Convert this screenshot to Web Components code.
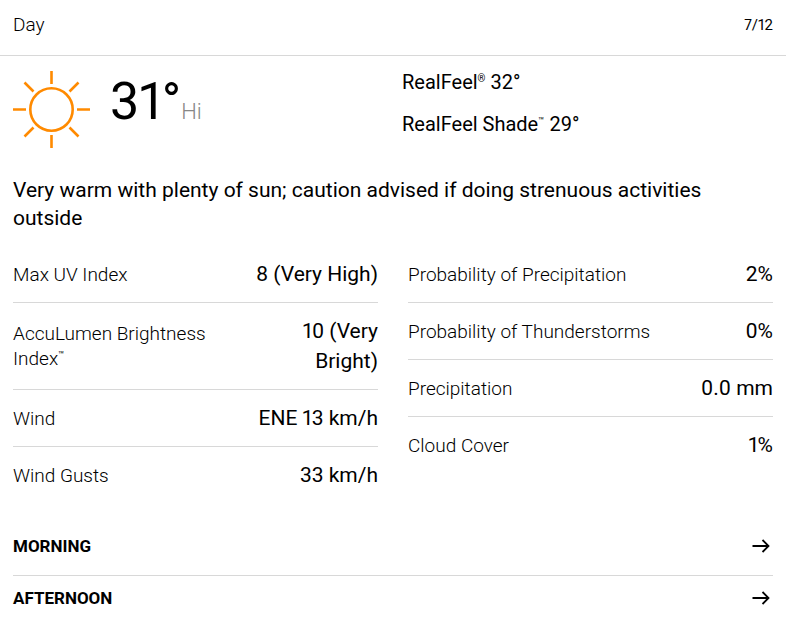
<!DOCTYPE html>
<html lang="en">
<head>
<meta charset="utf-8">
<meta name="viewport" content="width=device-width, initial-scale=1">
<title>Day forecast</title>
<style>
    body {
        margin: 0;
        background: #fff;
        color: #000;
        font-family: Roboto, "Liberation Sans", sans-serif;
        font-variant-numeric: proportional-nums;
    }
</style>
</head>
<body>
<day-card heading="Day" date="7/12">
    <current-temp slot="temp" value="31°" note="Hi"></current-temp>
    <real-feel slot="feel" name="RealFeel" mark="®" value="32°"></real-feel>
    <real-feel slot="feel" name="RealFeel Shade" mark="™" value="29°"></real-feel>
    <span slot="phrase">Very warm with plenty of sun; caution advised if doing strenuous activities outside</span>
    <detail-row slot="left" value="8 (Very High)">Max UV Index</detail-row>
    <detail-row slot="left" value="10 (Very Bright)">AccuLumen Brightness <span>Index</span><sup>™</sup></detail-row>
    <detail-row slot="left" value="ENE 13 km/h">Wind</detail-row>
    <detail-row slot="left" value="33 km/h">Wind Gusts</detail-row>
    <detail-row slot="right" value="2%">Probability of Precipitation</detail-row>
    <detail-row slot="right" value="0%">Probability of Thunderstorms</detail-row>
    <detail-row slot="right" value="0.0 mm">Precipitation</detail-row>
    <detail-row slot="right" value="1%">Cloud Cover</detail-row>
    <period-link slot="periods" href="#morning">Morning</period-link>
    <period-link slot="periods" href="#afternoon">Afternoon</period-link>
</day-card>

<script>
class DayCard extends HTMLElement {
    constructor() {
        super();
        this.attachShadow({ mode: 'open' });
        this.shadowRoot.innerHTML = `
            <style>
                :host {
                    display: block;
                }
                header {
                    display: flex;
                    justify-content: space-between;
                    align-items: center;
                    padding: 13px 13px 18px;
                    border-bottom: 1px solid #d8d8d8;
                    line-height: 24px;
                }
                h2 {
                    margin: 0;
                    font-size: 19px;
                    font-weight: 300;
                }
                .date {
                    font-size: 15px;
                }
                .content {
                    padding: 0 13px;
                }
                .top {
                    display: grid;
                    grid-template-columns: 1fr 1fr;
                    column-gap: 18px;
                    padding-top: 12px;
                }
                .phrase {
                    margin: 24px 0 14px;
                    font-size: 21px;
                    line-height: 28px;
                }
                .details {
                    display: grid;
                    grid-template-columns: 1fr 1fr;
                    column-gap: 30px;
                }
                .periods {
                    margin-top: 20px;
                }
            </style>
            <header>
                <h2>${this.getAttribute('heading')}</h2>
                <span class="date">${this.getAttribute('date')}</span>
            </header>
            <div class="content">
                <div class="top">
                    <slot name="temp"></slot>
                    <div><slot name="feel"></slot></div>
                </div>
                <p class="phrase"><slot name="phrase"></slot></p>
                <div class="details">
                    <div><slot name="left"></slot></div>
                    <div><slot name="right"></slot></div>
                </div>
                <nav class="periods"><slot name="periods"></slot></nav>
            </div>
        `;
    }
}

class CurrentTemp extends HTMLElement {
    constructor() {
        super();
        this.attachShadow({ mode: 'open' });
        this.shadowRoot.innerHTML = `
            <style>
                :host {
                    display: flex;
                    align-items: flex-start;
                    gap: 20px;
                }
                svg {
                    flex: none;
                    margin-top: 3px;
                }
                .temp {
                    font-size: 52px;
                    line-height: 68px;
                }
                .note {
                    color: #878787;
                    font-size: 22px;
                    font-weight: 300;
                }
            </style>
            <svg width="77" height="77" viewBox="0 0 77 77" fill="none" stroke="#ff8a00" stroke-width="2.6" aria-hidden="true">
                <circle cx="38.5" cy="38.5" r="21.2"/>
                <path d="M38.5 0v13M38.5 64v13M0 38.5h13M64 38.5h13M11.5 11.5l9 9M56.5 56.5l9 9M65.5 11.5l-9 9M20.5 56.5l-9 9"/>
            </svg>
            <div class="temp">${this.getAttribute('value')}<span class="note">${this.getAttribute('note')}</span></div>
        `;
    }
}

class RealFeel extends HTMLElement {
    constructor() {
        super();
        this.attachShadow({ mode: 'open' });
        this.shadowRoot.innerHTML = `
            <style>
                :host {
                    display: block;
                    margin-bottom: 14px;
                    font-size: 20px;
                    line-height: 28px;
                }
                sup {
                    font-size: 10px;
                    line-height: 0;
                    vertical-align: 7px;
                }
            </style>
            ${this.getAttribute('name')}<sup>${this.getAttribute('mark')}</sup> ${this.getAttribute('value')}
        `;
    }
}

class DetailRow extends HTMLElement {
    constructor() {
        super();
        this.attachShadow({ mode: 'open' });
        this.shadowRoot.innerHTML = `
            <style>
                :host {
                    display: flex;
                    justify-content: space-between;
                    align-items: center;
                    padding: 13px 0;
                    border-bottom: 1px solid #d8d8d8;
                }
                .label {
                    max-width: 67%;
                    font-size: 19px;
                    line-height: 25px;
                    font-weight: 300;
                }
                ::slotted(sup) {
                    font-size: 10px;
                    font-weight: 400;
                    line-height: 0;
                    vertical-align: 7px;
                }
                .value {
                    max-width: 34%;
                    font-size: 21px;
                    line-height: 30px;
                    text-align: right;
                }
            </style>
            <span class="label"><slot></slot></span>
            <span class="value">${this.getAttribute('value')}</span>
        `;
        // last row of each column has no rule under it
        const next = this.nextElementSibling;
        if (!next || next.slot !== this.slot) {
            this.style.borderBottomColor = 'transparent';
        }
    }
}

class PeriodLink extends HTMLElement {
    constructor() {
        super();
        this.attachShadow({ mode: 'open' });
        this.shadowRoot.innerHTML = `
            <style>
                :host {
                    display: block;
                    border-bottom: 1px solid #d8d8d8;
                }
                :host(:last-of-type) {
                    border-bottom: 0;
                }
                a {
                    display: flex;
                    justify-content: space-between;
                    align-items: center;
                    padding: 10px 3px 17px 0;
                    color: inherit;
                    font-size: 17px;
                    line-height: 24px;
                    font-weight: 700;
                    text-decoration: none;
                    text-transform: uppercase;
                }
            </style>
            <a href="${this.getAttribute('href')}">
                <slot></slot>
                <svg width="18" height="14" viewBox="0 0 18 14" fill="none" stroke="#000" stroke-width="1.8" aria-hidden="true">
                    <path d="M0.5 7h16M10.5 1l6 6l-6 6"/>
                </svg>
            </a>
        `;
    }
}

customElements.define('day-card', DayCard);
customElements.define('current-temp', CurrentTemp);
customElements.define('real-feel', RealFeel);
customElements.define('detail-row', DetailRow);
customElements.define('period-link', PeriodLink);
</script>
</body>
</html>
